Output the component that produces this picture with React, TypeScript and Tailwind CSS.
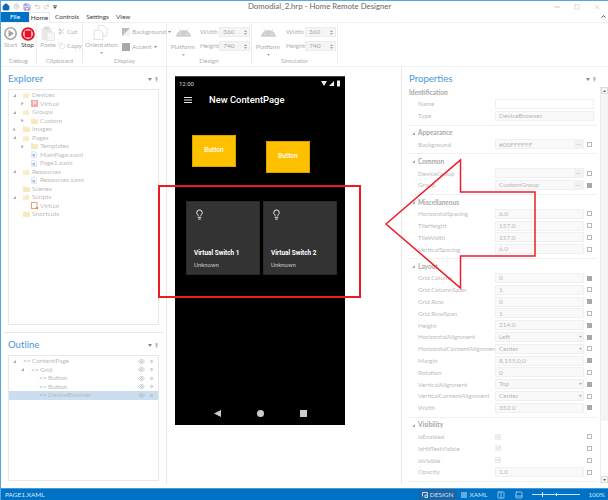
import React from 'react';
import { Columns2, Home, Lightbulb, Minus, PanelBottom, Redo2, Save, Scissors, Settings, Square, Undo2, X, Copy, Eye, ChevronUp, Check } from 'lucide-react';
import { FaAndroid } from 'react-icons/fa';

type TreeRow = { label: string; level: number; arrow?: 'open' | 'closed'; icon: 'folder' | 'open' | 'file' | 'device' | 'script' };

const explorerRows: TreeRow[] = [
  { label: 'Devices', level: 0, arrow: 'open', icon: 'open' },
  { label: 'Virtual', level: 1, arrow: 'closed', icon: 'device' },
  { label: 'Groups', level: 0, arrow: 'open', icon: 'open' },
  { label: 'Custom', level: 1, arrow: 'closed', icon: 'folder' },
  { label: 'Images', level: 0, arrow: 'closed', icon: 'folder' },
  { label: 'Pages', level: 0, arrow: 'open', icon: 'open' },
  { label: 'Templates', level: 1, arrow: 'closed', icon: 'folder' },
  { label: 'MainPage.xaml', level: 1, icon: 'file' },
  { label: 'Page1.xaml', level: 1, icon: 'file' },
  { label: 'Resources', level: 0, arrow: 'open', icon: 'open' },
  { label: 'Resources.xaml', level: 1, icon: 'file' },
  { label: 'Scenes', level: 0, icon: 'folder' },
  { label: 'Scripts', level: 0, arrow: 'open', icon: 'open' },
  { label: 'Virtual', level: 1, icon: 'script' },
  { label: 'Shortcuts', level: 0, icon: 'folder' },
];

const outlineRows = [
  { label: 'ContentPage', level: 0, arrow: true },
  { label: 'Grid', level: 1, arrow: true },
  { label: 'Button', level: 2 },
  { label: 'Button', level: 2 },
  { label: 'DeviceBrowser', level: 2, selected: true },
];

type Field = { label: string; value?: string; kind?: 'text' | 'drop' | 'dots' | 'bool' | 'wide' | 'white'; mark?: 'on' | 'off' };
type Section = { title: string; caret?: boolean; rows: Field[] };

const sections: Section[] = [
  {
    title: 'Identification',
    rows: [
      { label: 'Name', kind: 'white' },
      { label: 'Type', value: 'DeviceBrowser', kind: 'wide' },
    ],
  },
  { title: 'Appearance', caret: true, rows: [{ label: 'Background', value: '#00FFFFFF', kind: 'dots', mark: 'off' }] },
  {
    title: 'Common',
    caret: true,
    rows: [
      { label: 'DeviceGroup', kind: 'dots', mark: 'off' },
      { label: 'Group', value: 'CustomGroup', kind: 'dots', mark: 'on' },
    ],
  },
  {
    title: 'Miscellaneous',
    caret: true,
    rows: [
      { label: 'HorizontalSpacing', value: '6.0', mark: 'off' },
      { label: 'TileHeight', value: '157.0', mark: 'off' },
      { label: 'TileWidth', value: '157.0', mark: 'off' },
      { label: 'VerticalSpacing', value: '6.0', mark: 'off' },
    ],
  },
  {
    title: 'Layout',
    caret: true,
    rows: [
      { label: 'Grid.Column', value: '0', mark: 'on' },
      { label: 'Grid.ColumnSpan', value: '1', mark: 'off' },
      { label: 'Grid.Row', value: '0', mark: 'on' },
      { label: 'Grid.RowSpan', value: '1', mark: 'off' },
      { label: 'Height', value: '214.0', mark: 'on' },
      { label: 'HorizontalAlignment', value: 'Left', kind: 'drop', mark: 'on' },
      { label: 'HorizontalContentAlignment', value: 'Center', kind: 'drop', mark: 'off' },
      { label: 'Margin', value: '8,155,0,0', mark: 'on' },
      { label: 'Rotation', value: '0', mark: 'off' },
      { label: 'VerticalAlignment', value: 'Top', kind: 'drop', mark: 'on' },
      { label: 'VerticalContentAlignment', value: 'Center', kind: 'drop', mark: 'off' },
      { label: 'Width', value: '352.0', mark: 'on' },
    ],
  },
  {
    title: 'Visibility',
    caret: true,
    rows: [
      { label: 'IsEnabled', kind: 'bool', mark: 'off' },
      { label: 'IsHitTestVisible', kind: 'bool', mark: 'off' },
      { label: 'IsVisible', kind: 'bool', mark: 'off' },
      { label: 'Opacity', value: '1.0', mark: 'off' },
    ],
  },
];

function Arrow({ open }: { open?: boolean }) {
  return open ? (
    <svg width="3" height="3" viewBox="0 0 4 4"><path d="M0 4 L4 4 L4 0 Z" fill="#a8a8a8" /></svg>
  ) : (
    <svg width="3" height="5" viewBox="0 0 4 5"><path d="M0.5 0 L3.5 2.5 L0.5 5 Z" fill="#a8a8a8" /></svg>
  );
}

function TreeIcon({ kind }: { kind: TreeRow['icon'] }) {
  if (kind === 'device') {
    return <span className="w-[7px] h-[7px] bg-[#f7a8a8] text-white text-[5px] leading-[7px] text-center font-bold">P</span>;
  }
  if (kind === 'script') {
    return (
      <svg width="7" height="7" viewBox="0 0 7 7"><rect x="0.5" y="0.5" width="5.5" height="6" fill="#fff" stroke="#f0a070" /><rect x="5" y="5" width="2" height="2" fill="#e88050" /></svg>
    );
  }
  if (kind === 'file') {
    return (
      <svg width="6" height="7" viewBox="0 0 6 7"><path d="M0.5 0.5 H4 L5.5 2 V6.5 H0.5 Z" fill="#f2f6fa" stroke="#d3deea" strokeWidth="0.6" /><rect x="1.5" y="3" width="2.5" height="2.5" fill="#a4c4e2" /></svg>
    );
  }
  if (kind === 'open') {
    return (
      <svg width="7" height="6" viewBox="0 0 7 6"><path d="M0 6 V1.5 H3 L4 0.5 H5.5 V2.5 H7 L5.5 6 Z" fill="#f9ecc8" /></svg>
    );
  }
  return (
    <svg width="7" height="6" viewBox="0 0 7 6"><path d="M0 0.5 H2.5 L3.2 1.2 H7 V6 H0 Z" fill="#f8e8bd" /></svg>
  );
}

function PanelTitle({ title }: { title: string }) {
  return (
    <div className="flex items-center justify-between h-[14px]">
      <span className="text-[#4a98d8] text-[9.6px] leading-[14px]">{title}</span>
      <span className="flex items-center gap-[3px] mr-[1px]">
        <svg width="4" height="3" viewBox="0 0 4 3"><path d="M0 0 H4 L2 3 Z" fill="#8a8a8a" /></svg>
        <svg width="3" height="5" viewBox="0 0 3 5"><rect x="0.5" y="0" width="2" height="3.5" fill="#b5b5b5" /><rect x="1.2" y="3.5" width="0.6" height="1.5" fill="#999" /></svg>
      </span>
    </div>
  );
}

function Spin({ value }: { value: string }) {
  return (
    <div className="flex items-center justify-between w-[31px] h-[10px] bg-[#f5f5f5] border border-[#ececec] pl-[3px] pr-[2px] text-[#a8a8a8]">
      <span>{value}</span>
      <span className="flex flex-col gap-[1px]">
        <svg width="3" height="2" viewBox="0 0 3 2"><path d="M0 2 L1.5 0 L3 2 Z" fill="#a8a8a8" /></svg>
        <svg width="3" height="2" viewBox="0 0 3 2"><path d="M0 0 L1.5 2 L3 0 Z" fill="#a8a8a8" /></svg>
      </span>
    </div>
  );
}

function Group({ label, width, children }: { label: string; width: string; children: React.ReactNode }) {
  return (
    <div className={`${width} shrink-0 flex flex-col border-r border-[#ececec] mb-[1px]`}>
      <div className="h-[35px] flex">{children}</div>
      <div className="h-[8px] leading-[8px] text-center text-[#b0b0b0]">{label}</div>
    </div>
  );
}

function PlatformGroup({ label, width, gap }: { label: string; width: string; gap: string }) {
  return (
    <Group label={label} width={width}>
      <div className="w-[30px] flex flex-col items-center pt-[3px] text-[#b0b0b0] ml-[1px]">
        <FaAndroid size={15} className="text-[#cfcfcf]" />
        <span className="mt-[2px] leading-[8px]">Platform</span>
        <svg className="mt-[3px]" width="3" height="2" viewBox="0 0 3 2"><path d="M0 0 H3 L1.5 2 Z" fill="#a8a8a8" /></svg>
      </div>
      <div className={`flex flex-col gap-[4px] pt-[4px] ${gap} text-[#b0b0b0]`}>
        <div className="flex items-center justify-between w-[50px]"><span>Width</span><Spin value="360" /></div>
        <div className="flex items-center justify-between w-[50px]"><span>Height</span><Spin value="740" /></div>
      </div>
    </Group>
  );
}

function PropRow({ field }: { field: Field }) {
  const kind = field.kind ?? 'text';
  return (
    <div className="flex items-center h-[11.8px] pl-[9px]">
      <span className="w-[77px] shrink-0 text-[#bcbcbc] text-[6.3px] whitespace-nowrap">{field.label}</span>
      {kind === 'bool' ? (
        <span className="w-[89px] flex items-center">
          <span className="w-[6px] h-[6px] bg-[#f6f6f6] border border-[#ececec] flex items-center justify-center">
            <Check size={6} strokeWidth={3} className="text-[#a8a8a8]" />
          </span>
        </span>
      ) : (
        <span
          className={`${kind === 'white' || kind === 'wide' ? 'w-[99px]' : 'w-[89px]'} h-[10px] flex items-center border border-[#f0f0f0] ${kind === 'white' ? 'bg-white' : 'bg-[#f9f9f9]'} pl-[3px] text-[#b8b8b8] justify-between`}
        >
          <span>{field.value}</span>
          {kind === 'dots' && <span className="w-[9px] h-full bg-[#f2f2f2] text-center leading-[6px] text-[#aaa]">...</span>}
          {kind === 'drop' && (
            <span className="w-[6px] h-full bg-[#f6f6f6] flex items-center justify-center">
              <svg width="3" height="2" viewBox="0 0 3 2"><path d="M0 0 H3 L1.5 2 Z" fill="#b0b0b0" /></svg>
            </span>
          )}
        </span>
      )}
      {field.mark && (
        <span className={`ml-[3px] w-[5px] h-[5px] border ${field.mark === 'on' ? 'bg-[#a8a8a8] border-[#a8a8a8]' : 'bg-white border-[#b8b8b8]'}`} />
      )}
    </div>
  );
}

export default function App() {
  return (
    <div
      className="relative w-[608px] h-[500px] flex flex-col overflow-hidden bg-white border-t border-l border-[#5aa7e0] text-[6.5px] text-[#555]"
      style={{ fontFamily: 'Lato, "Open Sans", sans-serif' }}
    >
      {/* title bar */}
      <div className="h-[11px] shrink-0 flex items-center relative">
        <div className="flex items-center gap-[2px] pl-[1px]">
          <Home size={8} className="text-[#1168b8] fill-[#1168b8]" />
          <Settings size={7} className="ml-[1px] text-[#b5b5b5]" />
          <Save size={8} className="ml-[1px] text-[#6a58b8]" />
          <Undo2 size={7} className="ml-[1px] text-[#b5b5b5]" />
          <Redo2 size={7} className="text-[#b5b5b5]" />
          <svg className="ml-[1px]" width="4" height="4" viewBox="0 0 4 4"><rect width="4" height="0.7" fill="#555" /><path d="M0 1.4 H4 L2 4 Z" fill="#555" /></svg>
        </div>
        <span className="ml-[191px] text-[#666] text-[7.8px] whitespace-nowrap">Domodial_2.hrp - Home Remote Designer</span>
        <div className="ml-auto flex items-center gap-[13px] pr-[7px] text-[#a8a8a8]">
          <Minus size={8} />
          <Square size={6} strokeWidth={1.5} />
          <X size={8} strokeWidth={1.2} />
        </div>
      </div>
      {/* tabs */}
      <div className="h-[10px] shrink-0 flex items-stretch leading-[10px] text-[#444]">
        <div className="w-[28px] bg-[#0072c6] text-white text-center">File</div>
        <div className="w-[21px] text-center border-x border-t border-[#e8e8e8] text-[#333] bg-white z-10 h-[11px]">Home</div>
        <span className="ml-[5px]">Controls</span>
        <span className="ml-[7px]">Settings</span>
        <span className="ml-[7px]">View</span>
        <ChevronUp size={7} strokeWidth={3} className="ml-auto mr-[1px] mt-[1px] text-[#333]" />
      </div>
      {/* ribbon */}
      <div className="h-[45px] shrink-0 flex border-t border-b border-[#f0f0f0] text-[#b0b0b0]">
        <Group label="Debug" width="w-[36px]">
          <div className="flex gap-[4px] pl-[3px] pt-[4px]">
            <div className="flex flex-col items-center w-[13px]">
              <svg width="13" height="13" viewBox="0 0 13 13"><circle cx="6.5" cy="6.5" r="5.7" fill="#fff" stroke="#a3a3a3" strokeWidth="1.6" /><path d="M4.5 3 L10 6.5 L4.5 10 Z" fill="#a3a3a3" /></svg>
              <span className="mt-[1px] leading-[8px]">Start</span>
            </div>
            <div className="flex flex-col items-center w-[13px]">
              <svg width="14" height="14" viewBox="0 0 14 14"><circle cx="7" cy="7" r="5.8" fill="#fff" stroke="#e81123" strokeWidth="2" /><rect x="3.6" y="3.6" width="6.8" height="6.8" rx="0.8" fill="#e81123" /></svg>
              <span className="leading-[8px] text-[#444]">Stop</span>
            </div>
          </div>
        </Group>
        <Group label="Clipboard" width="w-[46px]">
          <div className="flex pl-[3px] pt-[3px]">
            <div className="flex flex-col items-center w-[16px]">
              <svg width="14" height="15" viewBox="0 0 14 15"><rect x="0.5" y="2" width="10" height="12" fill="#e8e8e8" /><rect x="3" y="0.5" width="5" height="3" fill="#d8d8d8" /><path d="M6 6 H12 L13.5 7.5 V14.5 H6 Z" fill="#f7f7f7" stroke="#dedede" strokeWidth="0.7" /></svg>
              <span className="leading-[8px]">Paste</span>
            </div>
            <div className="flex flex-col gap-[4px] ml-[2px] pt-[1px]">
              <span className="flex items-center gap-[2px]"><Scissors size={7} className="text-[#b5b5b5]" />Cut</span>
              <span className="flex items-center gap-[2px]"><Copy size={7} className="text-[#d5d5d5]" />Copy</span>
            </div>
          </div>
        </Group>
        <Group label="Display" width="w-[84px]">
          <div className="flex flex-col items-center w-[36px] ml-[2px] pt-[2px]">
            <svg width="17" height="15" viewBox="0 0 17 15" fill="#fff" stroke="#dcdcdc" strokeWidth="0.8"><path d="M1 5 H7 L10 8 V14.5 H1 Z" /><path d="M5 0.5 H11 L14 3.5 V11 H10 V8 L7 5 H5 Z" /></svg>
            <span className="mt-[1px] leading-[8px]">Orientation</span>
            <svg className="mt-[3px]" width="3" height="2" viewBox="0 0 3 2"><path d="M0 0 H3 L1.5 2 Z" fill="#a8a8a8" /></svg>
          </div>
          <div className="flex flex-col gap-[5px] ml-[4px] pt-[4px]">
            <span className="flex items-center gap-[2px]">
              <svg width="8" height="8" viewBox="0 0 8 8"><rect width="8" height="8" fill="#bdbdbd" /><path d="M8 0 L0 8 H8 Z" fill="#f2f2f2" /></svg>
              Background
              <svg width="3" height="2" viewBox="0 0 3 2"><path d="M0 0 H3 L1.5 2 Z" fill="#888" /></svg>
            </span>
            <span className="flex items-center gap-[2px]">
              <span className="w-[8px] h-[8px] bg-[#a8a8a8]" />
              Accent
              <svg width="3" height="2" viewBox="0 0 3 2"><path d="M0 0 H3 L1.5 2 Z" fill="#888" /></svg>
            </span>
          </div>
        </Group>
        <PlatformGroup label="Design" width="w-[85px]" gap="ml-[2px]" />
        <PlatformGroup label="Simulator" width="w-[86px]" gap="ml-[3px]" />
      </div>
      {/* panels */}
      <div className="flex-1 min-h-0 flex pb-[4px]">
        {/* left */}
        <div className="w-[166px] shrink-0 border-r border-[#e8e8e8] flex flex-col pt-[5px]">
          <div className="px-[7px]"><PanelTitle title="Explorer" /></div>
          <div className="mx-[7px] mt-[3px] h-[236px] border border-[#e8e8e8] pt-[1px]">
            {explorerRows.map((row, i) => (
              <div key={i} className="flex items-center h-[8.5px] text-[#bcbcbc] whitespace-nowrap" style={{ paddingLeft: 4 + row.level * 8 }}>
                <span className="w-[10px] flex items-center">{row.arrow && <Arrow open={row.arrow === 'open'} />}</span>
                <span className="w-[9px] flex items-center"><TreeIcon kind={row.icon} /></span>
                <span>{row.label}</span>
              </div>
            ))}
          </div>
          <div className="mx-[3px] mt-[7px] border-t border-[#e8e8e8]" />
          <div className="px-[7px] mt-[5px]"><PanelTitle title="Outline" /></div>
          <div className="mx-[7px] mt-[3px] flex-1 min-h-0 mb-[3px] border border-[#e8e8e8] pt-[1px]">
            {outlineRows.map((row, i) => (
              <div key={i} className={`flex items-center h-[8.5px] text-[#bcbcbc] whitespace-nowrap ${row.selected ? 'bg-[#c9def0] text-[#a8b4c0]' : ''}`} style={{ paddingLeft: 4 + row.level * 8 }}>
                <span className="w-[10px] flex items-center">{row.arrow && <Arrow open />}</span>
                <span className="w-[9px] text-[#a8a8a8] leading-[8px]">{'<>'}</span>
                <span>{row.label}</span>
                <span className="ml-auto flex items-center gap-[5px] pr-[5px]">
                  <Eye size={7} className="text-[#b0b0b0]" />
                  <span className="w-[3px] h-[3px] rounded-full border border-[#b0b0b0]" />
                </span>
              </div>
            ))}
          </div>
        </div>
        {/* design surface */}
        <div className="w-[234px] shrink-0 pt-[9px] pl-[8px]">
          <div className="w-[170px] h-[349px] bg-black border-t border-[#444] flex flex-col" style={{ fontFamily: 'Roboto, sans-serif' }}>
            <div className="h-[10px] mt-[1px] flex items-center justify-between pl-[4px] pr-[4px] text-[#d5d5d5] text-[6px]">
              <span>12:00</span>
              <svg width="20" height="7" viewBox="0 0 20 7" fill="#eee"><path d="M0 1 H6 L3 6 Z" /><path d="M8 6 L13 1 V6 Z" /><rect x="16" y="0.5" width="3" height="6" /></svg>
            </div>
            <div className="h-[24px] flex items-center pl-[9px]">
              <svg width="8" height="6" viewBox="0 0 8 6" fill="#e6e6e6"><rect width="8" height="1" /><rect y="2.5" width="8" height="1" /><rect y="5" width="8" height="1" /></svg>
              <span className="ml-[17px] text-white text-[9.4px] font-medium">New ContentPage</span>
            </div>
            <div className="flex items-start pl-[17px] gap-[30px] mt-[23px] h-[66px]">
              <div className="w-[44px] h-[32px] bg-[#ffc000] border border-[#d9a300] text-white flex items-center justify-center font-medium">Button</div>
              <div className="w-[44px] h-[32px] mt-[6px] bg-[#ffc000] border border-[#d9a300] text-white flex items-center justify-center font-medium">Button</div>
            </div>
            <div className="flex pl-[11px] gap-[3px]">
              {['Virtual Switch 1', 'Virtual Switch 2'].map(name => (
                <div key={name} className="w-[74px] h-[74px] bg-[#333] border border-[#2a2a2a] flex flex-col pl-[7px]">
                  <Lightbulb size={11} strokeWidth={2} className="mt-[7px] text-white" />
                  <span className="mt-[29px] text-white font-bold leading-[9px] text-[6.4px]">{name}</span>
                  <span className="mt-[2px] text-[#ccc] leading-[9px] text-[6px]">Unknown</span>
                </div>
              ))}
            </div>
            <div className="mt-auto mb-[8px] flex items-center justify-between pl-[39px] pr-[38px]">
              <svg width="7" height="7" viewBox="0 0 7 7"><path d="M7 0 V7 L0 3.5 Z" fill="#ccc" /></svg>
              <span className="w-[7px] h-[7px] rounded-full bg-[#ccc]" />
              <span className="w-[7px] h-[7px] bg-[#ccc]" />
            </div>
          </div>
        </div>
        {/* properties */}
        <div className="flex-1 min-w-0 border-l border-[#e8e8e8] flex">
          <div className="w-[195px] shrink-0 pl-[7px] pt-[5px]">
            <PanelTitle title="Properties" />
            <div className="mt-[1px]">
              {sections.map(section => (
                <div key={section.title} className="border-b border-[#f0f0f0] pb-[3px] mb-[2px]">
                  <div className={`h-[11px] flex items-center font-bold text-[#a8a8a8] ${section.caret ? 'pl-[3px]' : ''}`}>
                    {section.caret && <span className="w-[6px] flex items-center"><Arrow open /></span>}
                    <span>{section.title}</span>
                  </div>
                  {section.rows.map(field => <PropRow key={field.label} field={field} />)}
                </div>
              ))}
            </div>
          </div>
          <div className="ml-auto w-[8px] mt-[20px] mb-[1px] border-l border-[#ececec] flex flex-col items-center">
            <div className="h-[7px] w-full bg-[#f6f6f6] border border-[#ddd] flex items-center justify-center">
              <svg width="3" height="2" viewBox="0 0 3 2"><path d="M0 2 L1.5 0 L3 2 Z" fill="#666" /></svg>
            </div>
            <div className="h-[327px] w-full bg-[#f4f4f4]" />
            <div className="mt-auto h-[7px] w-full bg-[#f6f6f6] border border-[#ddd] flex items-center justify-center">
              <svg width="3" height="2" viewBox="0 0 3 2"><path d="M0 0 H3 L1.5 2 Z" fill="#666" /></svg>
            </div>
          </div>
        </div>
      </div>
      {/* status bar */}
      <div className="h-[12px] shrink-0 -ml-[1px] bg-[#0072c6] border-t border-[#4a9ad8] text-white flex items-center">
        <span className="pl-[5px] text-[#dbe9f6]">PAGE1.XAML</span>
        <div className="ml-auto flex items-center h-full text-[#cfe2f3]">
          <span className="flex items-center gap-[2px] h-full px-[3px] bg-[#1a65a5]">
            <svg width="6" height="6" viewBox="0 0 6 6" fill="none" stroke="#cfe2f3"><path d="M0.5 4.5 V0.5 H5.5 V2.5 M3 3 H5.5 V5.5 H3 Z" /></svg>
            DESIGN
          </span>
          <span className="flex items-center gap-[2px] ml-[5px]">
            <svg width="6" height="6" viewBox="0 0 6 6" stroke="#cfe2f3"><path d="M0 1 H6 M0 3 H6 M0 5 H6" /></svg>
            XAML
          </span>
          <Columns2 size={8} className="ml-[10px]" />
          <PanelBottom size={8} className="ml-[10px]" />
          <span className="relative ml-[9px] w-[48px] h-[1px] bg-[#cfe2f3]">
            <span className="absolute left-[10px] -top-[2px] w-[1px] h-[5px] bg-[#e6f0fa]" />
            <span className="absolute left-[24px] -top-[1px] w-[1px] h-[3px] bg-[#e6f0fa]" />
          </span>
          <span className="ml-[8px] mr-[3px]">100%</span>
        </div>
      </div>
      {/* red annotation */}
      <div className="absolute left-[157px] top-[184px] w-[203px] h-[113px] border-2 border-[#ed1c24]" />
      <svg className="absolute left-[379px] top-[149px]" width="165" height="145" viewBox="380 150 165 145" fill="none" stroke="#ed1c24" strokeWidth="1.5">
        <path d="M386 224 L460.5 160 V192 H535 V256 H460.5 V288 Z" />
      </svg>
    </div>
  );
}
